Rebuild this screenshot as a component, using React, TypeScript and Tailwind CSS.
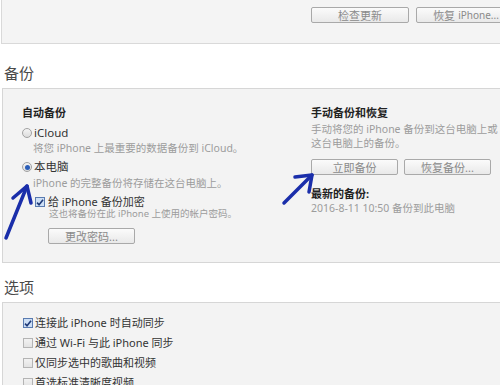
import type { ReactNode } from 'react';

const font = { fontFamily: '"Noto Sans", "Noto Sans CJK SC", sans-serif' };

const Button = ({ children, className = '' }: { children: ReactNode; className?: string }) => (
  <div
    className={`flex h-[16px] shrink-0 items-center justify-center rounded-[2px] border border-[#a9a9a9] bg-gradient-to-b from-[#fbfbfb] to-[#e9e9e9] text-[11px] leading-none text-[#8a8a8a] ${className}`}
  >
    {children}
  </div>
);

const Radio = ({ checked }: { checked?: boolean }) => (
  <span className="flex h-[10px] w-[10px] shrink-0 items-center justify-center rounded-full border border-[#a2a2a2] bg-gradient-to-b from-[#f4f4f4] to-[#dcdcdc]">
    {checked && <span className="h-[5px] w-[5px] rounded-full bg-[#2a5db8]" />}
  </span>
);

const Check = ({ checked }: { checked?: boolean }) => (
  <span
    className={`flex h-[10px] w-[10px] shrink-0 items-center justify-center border ${
      checked ? 'border-[#5a7bb0] bg-[#cddff5]' : 'border-[#b4b4b4] bg-gradient-to-b from-[#f2f2f2] to-[#e2e2e2]'
    }`}
  >
    {checked && (
      <svg width="9" height="9" viewBox="0 0 9 9">
        <path d="M1.2 4.6 L3.4 7 L7.9 1.3" fill="none" stroke="#1f3a78" strokeWidth="1.8" />
      </svg>
    )}
  </span>
);

// hand-drawn arrows pasted over the screenshot
const Arrows = () => (
  <svg className="pointer-events-none absolute left-0 top-0" width="500" height="385">
    <g fill="none" stroke="#1a2eaa" strokeWidth="3.5" strokeLinecap="round" strokeLinejoin="round">
      <path d="M6 238 L27 186" />
      <path d="M13 198 L27 186 L31 203" />
      <path d="M284 203 L312 175" />
      <path d="M295 177 L312 175 L309 192" />
    </g>
  </svg>
);

export default function App() {
  return (
    <div className="relative h-[385px] w-[500px] overflow-hidden bg-white text-[#333]" style={font}>
      {/* top panel */}
      <div className="ml-[1px] h-[44px] border-b border-l border-[#d9d9d9] bg-[#f4f4f4]">
        <div className="flex gap-[7px] pl-[309px] pt-[7px]">
          <Button className="w-[98px] text-[#7c7c7c]">检查更新</Button>
          <Button className="w-[100px]">
            恢复 <span className="ml-[3px] text-[10px]">iPhone...</span>
          </Button>
        </div>
      </div>

      <div className="h-[44px] pl-[4px] pt-[19px] text-[15px] leading-[20px] text-[#4a4a4a]">备份</div>

      {/* backup panel */}
      <div className="ml-[2px] flex h-[175px] border-b border-l border-t border-[#d6d6d6] bg-[#f3f3f3]">
        <div className="w-[290px] shrink-0 pl-[19px] pt-[16px]">
          <div className="text-[11px] font-bold leading-[16px] text-[#222]">自动备份</div>
          <div className="mt-[4px] flex items-center gap-[1px] text-[11.5px] leading-[16px]">
            <Radio />
            <span className="ml-[1px]">iCloud</span>
          </div>
          <div className="pl-[11px] text-[10.5px] leading-[14px] text-[#9c9c9c]">
            将您 iPhone 上最重要的数据备份到 iCloud。
          </div>
          <div className="mt-[4px] flex items-center gap-[1px] text-[11.5px] leading-[16px]">
            <Radio checked />
            <span className="ml-[1px]">本电脑</span>
          </div>
          <div className="mt-[1px] pl-[11px] text-[10.5px] leading-[14px] text-[#9c9c9c]">
            iPhone 的完整备份将存储在这台电脑上。
          </div>
          <div className="mt-[6px] flex items-center gap-[3px] pl-[13px] text-[11px] leading-[12px]">
            <Check checked />
            <span>给 iPhone 备份加密</span>
          </div>
          <div className="pl-[27px] text-[9.5px] leading-[12px] text-[#9c9c9c]">
            这也将备份在此 iPhone 上使用的帐户密码。
          </div>
          <div className="mt-[8px] pl-[26px]">
            <Button className="w-[87px]">更改密码...</Button>
          </div>
        </div>

        <div className="shrink-0 pl-[18px] pt-[16px]">
          <div className="text-[11px] font-bold leading-[16px] text-[#222]">手动备份和恢复</div>
          <div className="mt-[1px] whitespace-nowrap text-[10.5px] leading-[14px] text-[#9c9c9c]">
            <div>手动将您的 iPhone 备份到这台电脑上或</div>
            <div>这台电脑上的备份。</div>
          </div>
          <div className="mt-[9px] flex gap-[6px]">
            <Button className="w-[87px]">立即备份</Button>
            <Button className="w-[87px]">恢复备份...</Button>
          </div>
          <div className="mt-[12px] text-[11px] font-bold leading-[14px] text-[#222]">最新的备份:</div>
          <div className="whitespace-nowrap text-[10.5px] leading-[14px] text-[#9c9c9c]">
            2016-8-11 10:50 备份到此电脑
          </div>
        </div>
      </div>

      <div className="h-[39px] pl-[4px] pt-[14px] text-[15px] leading-[20px] text-[#4a4a4a]">选项</div>

      {/* options panel */}
      <div className="ml-[2px] h-[100px] border-l border-t border-[#d6d6d6] bg-[#f3f3f3] pl-[20px] pt-[10px]">
        {[
          { label: '连接此 iPhone 时自动同步', checked: true },
          { label: '通过 Wi-Fi 与此 iPhone 同步' },
          { label: '仅同步选中的歌曲和视频' },
          { label: '首选标准清晰度视频' },
        ].map((row) => (
          <div key={row.label} className="flex h-[20px] items-center gap-[1px] text-[11px]">
            <Check checked={row.checked} />
            <span className="ml-[1px]">{row.label}</span>
          </div>
        ))}
      </div>

      <Arrows />
    </div>
  );
}
